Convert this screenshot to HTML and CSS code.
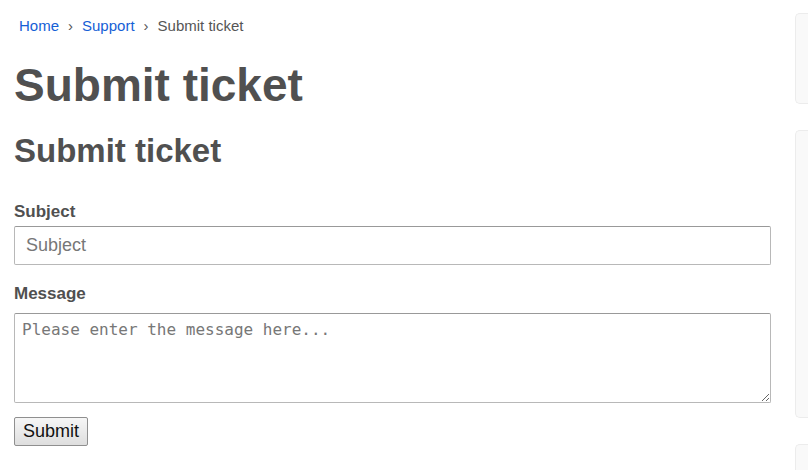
FILE: index.html
```html
<!DOCTYPE html>
<html>
<head>
<meta charset="utf-8">
<link rel="stylesheet" href="styles.css">
</head>
<body>
<div class="page">
  <main class="main">
    <nav class="crumbs">
      <a href="#">Home</a><span class="sep">›</span><a href="#">Support</a><span class="sep">›</span><span class="cur">Submit ticket</span>
    </nav>
    <h1 class="title">Submit ticket</h1>
    <h2 class="subtitle">Submit ticket</h2>
    <form class="form">
      <label class="label" for="subject">Subject</label>
      <input class="input" id="subject" type="text" placeholder="Subject">
      <label class="label label-msg" for="msg">Message</label>
      <textarea class="textarea" id="msg" placeholder="Please enter the message here..."></textarea>
      <div class="actions"><button class="btn" type="button">Submit</button></div>
    </form>
  </main>
  <aside class="side">
    <div class="card card-1"></div>
    <div class="card card-2"></div>
    <div class="card card-3"></div>
  </aside>
</div>
</body>
</html>
```
FILE: styles.css
```css
html, body { margin: 0; padding: 0; background: #fff; }
body { font-family: "Liberation Sans", Arial, sans-serif; color: #555; overflow: hidden; height: 470px; }
.page { display: flex; gap: 24px; padding: 0 0 0 14px; height: 470px; overflow: hidden; }
.main { width: 757px; flex: none; }
.crumbs { font-size: 15px; padding: 17px 0 0 5px; height: 18px; line-height: 18px; color: #555; }
.crumbs a { color: #1560d6; text-decoration: none; }
.crumbs .sep { margin: 0 9px; color: #555; }
.title { font-size: 46px; line-height: 52px; margin: 24px 0 0; font-weight: bold; color: #505050; }
.subtitle { font-size: 33px; line-height: 40px; margin: 20px 0 0; font-weight: bold; color: #505050; }
.form { display: flex; flex-direction: column; margin-top: 31px; }
.label { font-size: 17px; font-weight: bold; line-height: 20px; color: #505050; margin-bottom: 4px; }
.label-msg { margin-top: 19px; margin-bottom: 9px; }
.input { box-sizing: border-box; width: 757px; height: 39px; margin: 0; border: 1px solid #b8b8b8; border-top-color: #999; border-radius: 2px; padding: 0 11px; font-family: "Liberation Sans", Arial, sans-serif; font-size: 18px; color: #333; }
.input::placeholder { color: #777; }
.textarea { box-sizing: border-box; width: 757px; height: 90px; margin: 0; border: 1px solid #b8b8b8; border-top-color: #999; border-radius: 2px; padding: 6px 7px; font-family: "DejaVu Sans Mono", monospace; font-size: 16px; color: #333; resize: vertical; }
.textarea::placeholder { color: #777; }
.actions { margin-top: 14px; }
.btn { font-family: "Liberation Sans", Arial, sans-serif; font-size: 18px; color: #111; padding: 2px 8px; height: 29px; border: 1px solid #8f8f8f; border-radius: 2px; background: linear-gradient(#f6f6f6, #dedede); }
.side { flex: 1; display: flex; flex-direction: column; gap: 26px; padding-top: 13px; }
.card { background: #f9f9f9; border: 1px solid #ececec; border-right: none; border-radius: 5px 0 0 5px; }
.card-1 { height: 89px; flex: none; }
.card-2 { height: 286px; flex: none; }
.card-3 { height: 40px; flex: none; }
```
